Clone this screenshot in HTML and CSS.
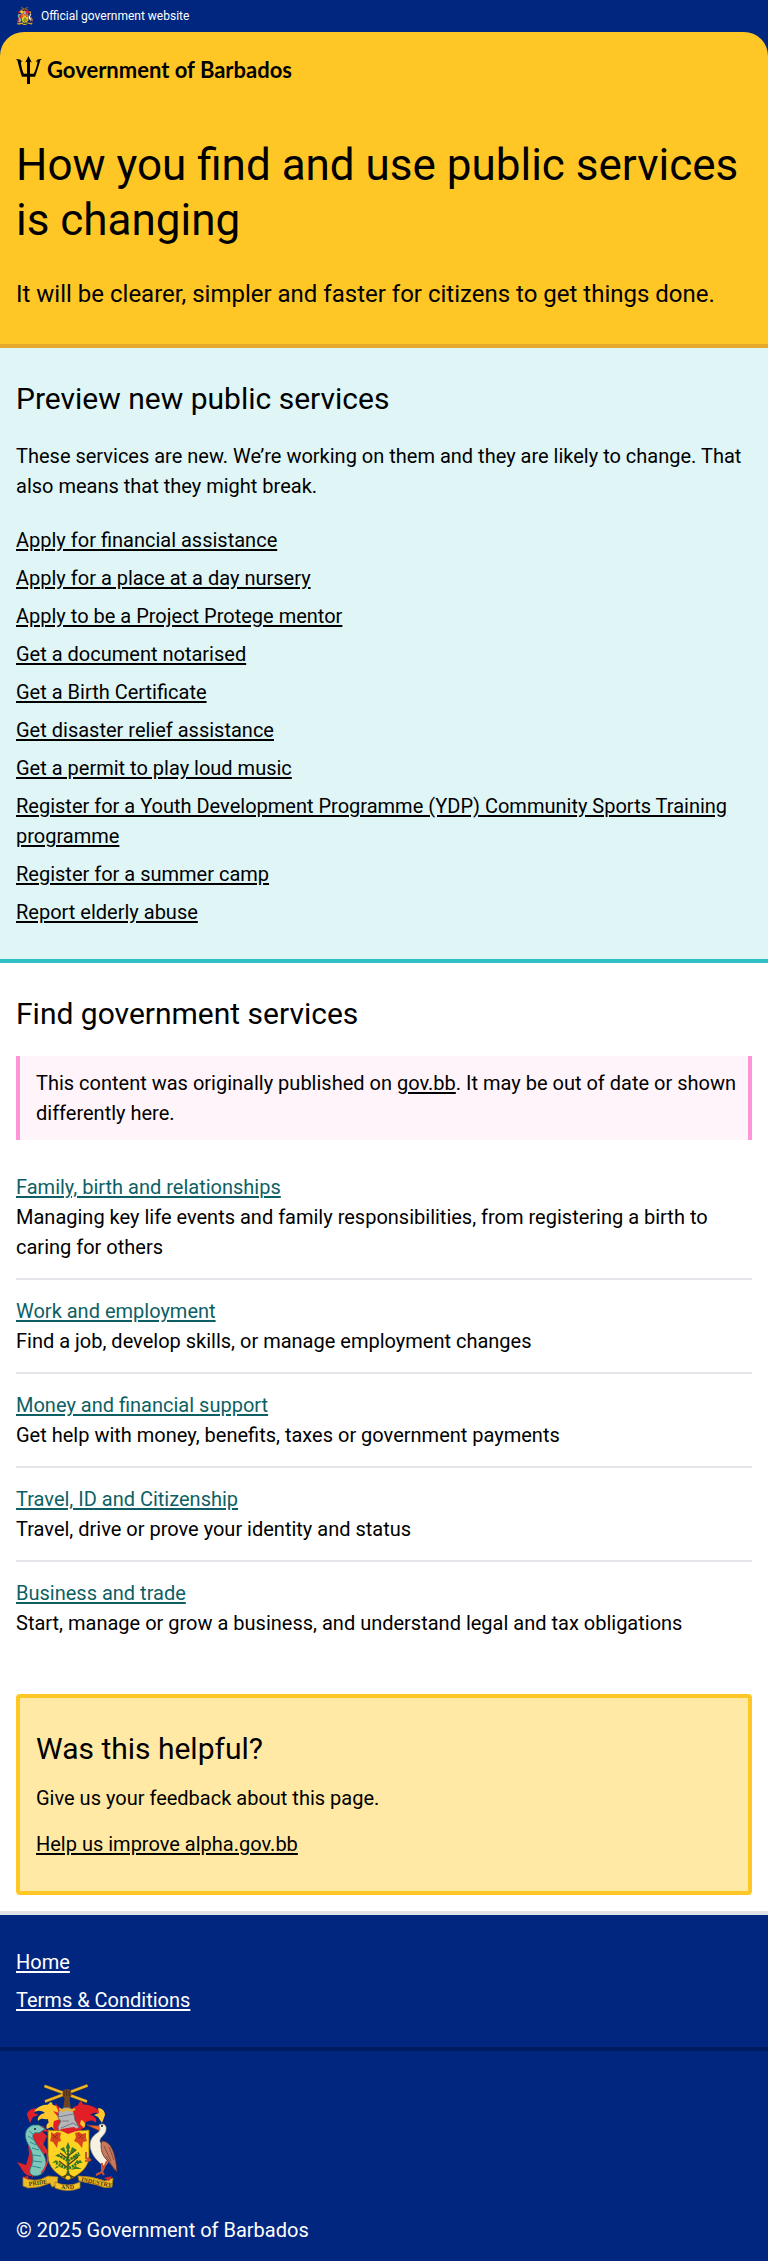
FILE: index.html
```html
<!DOCTYPE html>
<html lang="en">
<head>
<meta charset="utf-8">
<meta name="viewport" content="width=device-width, initial-scale=1">
<title>Government of Barbados</title>
<link rel="stylesheet" href="styles.css">
</head>
<body>
<div class="masthead">
  <div class="official">
    <svg class="official-crest" viewBox="0 0 100 108" aria-hidden="true"><use href="#crest"/></svg>
    <span>Official government website</span>
  </div>
  <header class="hero">
    <a class="brand" href="#">
      <svg class="trident" viewBox="0 0 26 28" aria-hidden="true">
        <path d="M12.500 0l3.300 6.500-1.800-.7v12h3.700c1.900-3.800 3.300-8 3.900-12.600l-2.200.9L21.600 3.600l4.400-.8-1.700 1.500c-1.500 5.400-3.200 10.500-5.200 16.500H14V28h-3v-7.200H5.900C4 14.800 2.700 9.700 1.500 4.700L0 3l4.200.6 2.500 2.500-1.900-.6c.4 4.300 1.300 8.500 3 12.300H11v-12l-1.800.7z"/>
      </svg>
      <span class="brand-name">Government of Barbados</span>
    </a>
    <h1 class="title">How you find and use public services is changing</h1>
    <p class="lead">It will be clearer, simpler and faster for citizens to get things done.</p>
  </header>
</div>
<main>
  <section class="preview">
    <h2 class="heading">Preview new public services</h2>
    <p class="intro">These services are new. We’re working on them and they are likely to change. That also means that they might break.</p>
    <ul class="links">
      <li><a href="#">Apply for financial assistance</a></li>
      <li><a href="#">Apply for a place at a day nursery</a></li>
      <li><a href="#">Apply to be a Project Protege mentor</a></li>
      <li><a href="#">Get a document notarised</a></li>
      <li><a href="#">Get a Birth Certificate</a></li>
      <li><a href="#">Get disaster relief assistance</a></li>
      <li><a href="#">Get a permit to play loud music</a></li>
      <li><a href="#">Register for a Youth Development Programme (YDP) Community Sports Training programme</a></li>
      <li><a href="#">Register for a summer camp</a></li>
      <li><a href="#">Report elderly abuse</a></li>
    </ul>
  </section>
  <section class="find">
    <h2 class="heading">Find government services</h2>
    <p class="notice">This content was originally published on <a href="#">gov.bb</a>. It may be out of date or shown differently here.</p>
    <div class="topics">
      <article class="topic">
        <h3><a href="#">Family, birth and relationships</a></h3>
        <p>Managing key life events and family responsibilities, from registering a birth to caring for others</p>
      </article>
      <article class="topic">
        <h3><a href="#">Work and employment</a></h3>
        <p>Find a job, develop skills, or manage employment changes</p>
      </article>
      <article class="topic">
        <h3><a href="#">Money and financial support</a></h3>
        <p>Get help with money, benefits, taxes or government payments</p>
      </article>
      <article class="topic">
        <h3><a href="#">Travel, ID and Citizenship</a></h3>
        <p>Travel, drive or prove your identity and status</p>
      </article>
      <article class="topic">
        <h3><a href="#">Business and trade</a></h3>
        <p>Start, manage or grow a business, and understand legal and tax obligations</p>
      </article>
    </div>
  </section>
  <section class="feedback">
    <h2 class="heading">Was this helpful?</h2>
    <p>Give us your feedback about this page.</p>
    <p><a href="#">Help us improve alpha.gov.bb</a></p>
  </section>
</main>
<footer class="footer">
  <ul class="links footer-links">
    <li><a href="#">Home</a></li>
    <li><a href="#">Terms &amp; Conditions</a></li>
  </ul>
  <div class="footer-end">
    <svg class="crest" viewBox="0 0 100 108" role="img" aria-label="Coat of arms of Barbados">
      <g id="crest">
        <!-- crossed sugar canes and arm -->
        <path d="M28.500 3L71 18.500M71.500 2.500L29 18.500" stroke="#8d6a14" stroke-width="3.200"/>
        <path d="M28.500 3L71 18.500M71.500 2.500L29 18.500" stroke="#f2b92b" stroke-width="1.900"/>
        <path d="M47 7.500q4-3 8 0l.5 5-2 3 1.500 11h-8l1.500-11-2-3z" fill="#704321"/>
        <path d="M48 8v5M50.500 7v6M53 8v5" stroke="#3c2412" stroke-width=".7"/>
        <!-- mantling -->
        <path d="M48 29C40 18 22 20 17 30c4-3 8-3 12 0-5 1-8 4-7 8 4-4 6-1 10-2 0 5 4 8 8 12 0-5 2-10 8-19z" fill="#ffc72c"/>
        <path d="M31 29c-1-4 1-9 4-10 3 2 2 7 1 10zM36 38c-4 1-7 4-5 8l8-4z" fill="#ffc72c"/>
        <path d="M20 25c-5 1-9 3-9 7l3 8 3-6 6-2-5-2zM43 24l-4-4 4 10-6-2 7 8-2 5 4-4z" fill="#e21f26"/>
        <path d="M38 38l6-2 4 10-9 3q-3-5-1-11z" fill="#e21f26"/>
        <path d="M53 29c7-12 28-9 34 4-5-4-9-4-13-1 5 1 7 4 6 8-4-4-7-2-10-1 0 5-3 7-8 9 0-7-2-13-9-19z" fill="#e21f26"/>
        <path d="M62 28c-1-4 0-8 3-10 3 3 3 7 2 11z" fill="#e21f26"/>
        <path d="M82 25c4 0 7 3 7 7l-3 8-4-6-4-2 5-2zM65 37c4 1 5 5 3 8l-4-4z" fill="#ffc72c"/>
        <!-- helm -->
        <path d="M43 28c3-4 10-5 14-1l2 10 4 7c-3 3-6 5-11 4l-9 1-1-5 3-6-3-3z" fill="#b5b6b9" stroke="#66676b" stroke-width=".8"/>
        <path d="M42 34l15-3M46 38h7M45 45l12-5 5 3" stroke="#727378" stroke-width=".9" fill="none"/>
        <path d="M43 26l4 2 4-2 4 2 4-2" stroke="#e6af25" stroke-width="2" fill="none"/>
        <!-- shield -->
        <path d="M32 47c8 1 15 0 20 2 6-2 13-1 21-2v26c0 11-8 18-21 24-12-6-20-13-20-24z" fill="#ffd321" stroke="#937415" stroke-width=".8"/>
        <path d="M44 47l8 4 11-4-5-3-13 2z" fill="#e21f26"/>
        <path d="M35 49l3 2 3-2 4 1-1 4 1 4-3 1-1 6-4-6-3-1 1-4zM59 50l4-1 3 2 4-1v5l1 3-4 1-1 6-4-5-4-2 2-4z" fill="#d8451f"/>
        <path d="M37 52l5 4m0-5l-5 5m25-5l5 5m0-5l-5 5" stroke="#7b281b" stroke-width=".7"/>
        <!-- bearded fig tree -->
        <path d="M52 93V67M52 85l-9-7M52 82l10-8M52 76l-8-6M52 73l8-6M52 91l-7 4M52 91l7 4M52 89l-4 7M52 89l4 7" stroke="#503a14" stroke-width="1.300" fill="none"/>
        <path d="M52 64V92M40 80l12 6 13-8M42 72l10 6 11-8" stroke="#2f7327" stroke-width="2.600" stroke-dasharray="2 1" fill="none"/>
        <path d="M52 59l-2 5 2 5 2-5zM48 64l-4 2 4 3 3 4zM56 64l5 3-5 2-3 4zM42 71l-3 2 5 1 6 3zM60 71l5 1-5 3-6 2zM40 77l-4 3 7-1 4 4zM61 77l6 3-7 0-4 4zM41 83l-3 3 7-3 4 3zM59 83l7 3-7 0-4 1z" fill="#337b29"/>
        <!-- dolphin -->
        <path d="M11 53q6-12 16-10l6 6-7-1 5 5-4 9 5 6-6 5 3 7-9 8-4 7z" fill="#d9242e"/>
        <path d="M1 79l9 3 4-14 4 15-3 10c-7 0-8-6-14-14z" fill="#d9242e"/>
        <path d="M17 42c-8 3-9 10-6 17 5 9 8 16 4 25-2 4-2 8 4 9 8 0 11-7 11-13 0-9-8-15-12-23-3-6 0-8 5-7l6-4-6-4z" fill="#80c8ba" stroke="#22777c" stroke-width=".8"/>
        <path d="M13 48l5 4m-6 1l6 4m-4 2l6 3m-4 3l7 2m-6 5l8 1m-8 5l9 1m-10 4l9 2" stroke="#278a99" stroke-width="1"/>
        <path d="M24 59c10 9 10 22 1 31" stroke="#d83637" stroke-width="1.500" fill="none"/>
        <circle cx="19" cy="46" r="1" fill="#122"/>
        <!-- pelican -->
        <path d="M71 42l12 1 4 3-3 2z" fill="#ed6a31" stroke="#9d3b21" stroke-width=".6"/>
        <path d="M83 42c5-3 8 1 7 5-1 6-7 7-6 12 4 5 8 10 8 17 0 8-5 8-8 4-7-6-12-15-9-23 3-7 9-7 9-11z" fill="#f7f2df" stroke="#a59b84" stroke-width=".6"/>
        <path d="M86 58c10 0 14 15 15 31L90 76c-5-5-6-14-4-18z" fill="#c9795f" stroke="#5c2f29" stroke-width=".8"/>
        <path d="M88 63l7 15m-5-5l9 14m-6-23l5 13" stroke="#89503f" stroke-width="1"/>
        <path d="M86 80v9l-6 3m6-3l2 3M91 78l-5 11M75 77l-5-2v-6m5 8l-6 1" stroke="#cd5332" stroke-width="2" fill="none"/>
        <circle cx="86" cy="43" r="1" fill="#151515"/>
        <!-- motto scroll -->
        <path d="M7 94q12 7 25-1l10 1-1 8-5 2-2-4q-10 5-22 5l-5-2z" fill="#eebb28" stroke="#a67b16" stroke-width=".8"/>
        <path d="M62 93q14 0 27 5l8-3-1 9q-7 2-15-2-8-2-18-4z" fill="#eebb28" stroke="#a67b16" stroke-width=".8"/>
        <path d="M39 99q13 6 25 0v6q-12 5-25 0z" fill="#f5c62c" stroke="#a67b16" stroke-width=".8"/>
        <path d="M7 94l5-1 1 4zM88 95l8-2-3 5z" fill="#d62828"/>
      </g>
      <g class="motto">
        <text x="13" y="103" transform="rotate(-8 13 103)">PRIDE</text>
        <text x="45" y="106">AND</text>
        <text x="65" y="98" transform="rotate(12 65 98)">INDUSTRY</text>
      </g>
    </svg>
    <p>© 2025 Government of Barbados</p>
  </div>
</footer>
</body>
</html>
```

FILE: styles.css
```css
* {
  box-sizing: border-box;
}

body,
h1,
h2,
h3,
p,
ul {
  margin: 0;
}

body {
  font-family: Roboto, "Liberation Sans", Arial, sans-serif;
  font-size: 20px;
  line-height: 30px;
  color: #000;
  background: #fff;
}

a {
  color: inherit;
  text-decoration-thickness: 2px;
  text-underline-offset: 2px;
}

svg {
  display: block;
}

.masthead {
  background: #00267f;
}

.official {
  display: flex;
  align-items: center;
  gap: 8px;
  height: 32px;
  padding: 0 16px;
  color: #fff;
  font-size: 12px;
  line-height: 16px;
}

.official-crest {
  width: 17px;
  height: 18px;
}

.hero {
  padding: 24px 16px 32px;
  background: #ffc726;
  border-bottom: 4px solid #e6a82b;
  border-radius: 24px 24px 0 0;
}

.brand {
  display: flex;
  align-items: center;
  gap: 5px;
  width: fit-content;
  height: 28px;
  margin-bottom: 54px;
  text-decoration: none;
}

.trident {
  width: 26px;
  height: 28px;
}

.brand-name {
  font-family: Lato, "Liberation Sans", sans-serif;
  font-size: 22px;
  font-weight: 700;
  line-height: 28px;
}

.title {
  margin-bottom: 28px;
  font-size: 44px;
  font-weight: 400;
  line-height: 55px;
}

.lead {
  font-size: 24px;
  line-height: 36px;
}

.heading {
  font-size: 30px;
  font-weight: 400;
  line-height: 37px;
}

.preview {
  padding: 32px 16px;
  background: #dff5f6;
  border-bottom: 4px solid #30c0c8;
}

.intro {
  margin: 24px 0;
}

.links {
  display: flex;
  flex-direction: column;
  gap: 8px;
  padding: 0;
  list-style: none;
}

.find {
  padding: 32px 16px 24px;
}

.notice {
  margin: 24px 0 16px;
  padding: 12px 8px 12px 16px;
  background: #fff4fa;
  border: solid #ff94d9;
  border-width: 0 4px;
}

.topic {
  padding: 16px 0;
}

.topic + .topic {
  border-top: 2px solid #e5e6ec;
}

.topic h3 {
  color: #0e5f64;
  font-size: 20px;
  font-weight: 400;
}

.feedback {
  display: grid;
  gap: 16px;
  margin: 16px;
  padding: 32px 16px;
  background: #ffe9a5;
  border: 4px solid #ffc726;
  border-radius: 4px;
}

.footer {
  color: #fff;
  background: #00267f;
  border-top: 4px solid #e0e4e9;
}

.footer-links {
  padding: 32px 16px;
  border-bottom: 4px solid #001c60;
}

.footer-end {
  display: grid;
  gap: 24px;
  padding: 32px 16px 16px;
}

.crest {
  width: 100px;
  height: 108px;
  overflow: visible;
}

.motto {
  fill: #4b3a0c;
  font-family: "Liberation Serif", serif;
  font-size: 6px;
  font-weight: 700;
}
```
